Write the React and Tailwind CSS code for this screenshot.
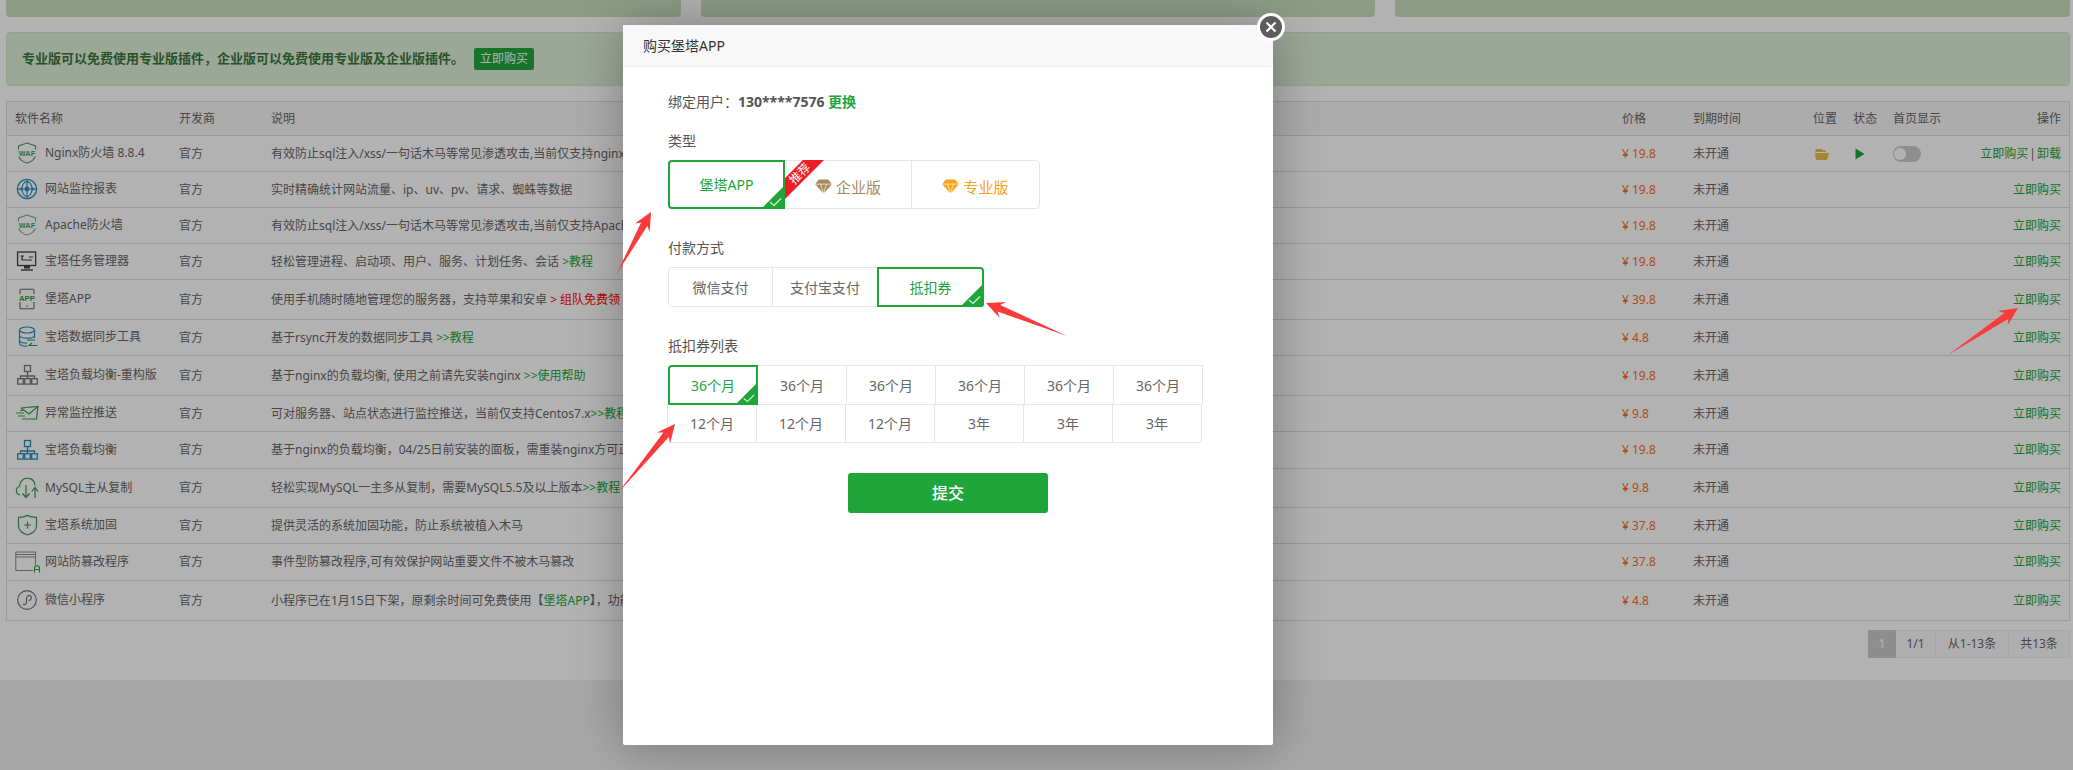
import React from "react";

function Waf({ tone = "#5f8f7f" }) {
  return (
    <svg viewBox="0 0 26 22" className="w-[26px] h-[22px]" fill="none">
      <path d="M12 1 L20.5 4 V13 C20.5 17 16 20 12 21 C8 20 3.5 17 3.5 13 V4 Z" stroke={tone} strokeWidth="1.1" />
      <rect x="3" y="7.5" width="18" height="7" fill="#fff" />
      <text x="12" y="13.6" textAnchor="middle" fontSize="7.4" fontWeight="700" fill="#3c9f78" fontFamily="'Liberation Sans',sans-serif">WAF</text>
    </svg>
  );
}
function Globe() {
  return (
    <svg viewBox="0 0 26 22" className="w-[26px] h-[22px]" fill="none" stroke="#2a8fbd" strokeWidth="1.4">
      <circle cx="12" cy="11" r="9.6" />
      <ellipse cx="12" cy="11" rx="5" ry="7.4" strokeWidth="1.1" />
      <path d="M12 1.5 V20.5 M2.5 11 H21.5" strokeWidth="1.1" />
      <circle cx="12" cy="11" r="2.4" fill="#2a8fbd" stroke="none" />
      <path d="M17 9 L20 11 L17 13 Z" fill="#2a8fbd" stroke="none" />
      <path d="M7 9 L4 11 L7 13 Z" fill="#2a8fbd" stroke="none" />
    </svg>
  );
}
function Monitor() {
  return (
    <svg viewBox="0 0 26 22" className="w-[26px] h-[22px]" fill="none" stroke="#3f3f3f" strokeWidth="1.3">
      <rect x="2.6" y="2" width="18" height="13.5" />
      <path d="M5.5 6 H9 M7 6 V10 H17 M14 7 H18" strokeWidth="1.2" />
      <rect x="9" y="15.5" width="6" height="3" fill="#3f3f3f" stroke="none" />
      <path d="M6 20 H18" strokeWidth="1.4" />
    </svg>
  );
}
function Phone() {
  return (
    <svg viewBox="0 0 26 22" className="w-[26px] h-[22px]" fill="none">
      <rect x="5" y="1.2" width="14" height="19.6" rx="1" stroke="#666" strokeWidth="1.1" />
      <rect x="3" y="6" width="18" height="8" fill="#fff" />
      <circle cx="12" cy="18" r="0.8" fill="#666" />
      <text x="12" y="13" textAnchor="middle" fontSize="7.8" fontWeight="700" fill="#2f9a4a" fontFamily="'Liberation Sans',sans-serif">APP</text>
    </svg>
  );
}
function Db() {
  return (
    <svg viewBox="0 0 26 22" className="w-[26px] h-[22px]" fill="none" stroke="#2a8fbd" strokeWidth="1.2">
      <ellipse cx="12" cy="4" rx="7.5" ry="3" />
      <path d="M4.5 4 V17 C4.5 19 8 20.2 12 20.2 M19.5 4 V12 M4.5 9 C4.5 11 8 12.2 12 12.2 S19.5 11 19.5 9 M4.5 14 C4.5 16 8 17.2 12 17.2" />
      <path d="M12 14 H20 M22.5 19.5 H14 L17 17" stroke="#2f9a4a" strokeWidth="1.1" />
    </svg>
  );
}
function Net({ c }) {
  return (
    <svg viewBox="0 0 26 22" className="w-[26px] h-[22px]" fill="none" stroke={c} strokeWidth="1.3">
      <rect x="9.5" y="1.5" width="6" height="6" />
      <path d="M12.5 7.5 V12 M5.5 14.5 V12 H19.5 V14.5 M12.5 12 V14.5" />
      <rect x="2.7" y="14.7" width="5.6" height="5.4" />
      <rect x="9.7" y="14.7" width="5.6" height="5.4" />
      <rect x="16.7" y="14.7" width="5.6" height="5.4" />
    </svg>
  );
}
function Mail() {
  return (
    <svg viewBox="0 0 26 22" className="w-[26px] h-[22px]" fill="none" stroke="#3e9a52" strokeWidth="1.2">
      <path d="M6 6 L23 4.5 L21.5 17 L7 17" />
      <path d="M6 6 L14 12 L23 4.5" />
      <path d="M1 11 H9 M3 14 H10 M5 8.5 H8" />
    </svg>
  );
}
function Cloud() {
  return (
    <svg viewBox="0 0 26 22" className="w-[26px] h-[22px]" fill="none" stroke="#2f9a4a" strokeWidth="1.2">
      <path d="M5 18 C0.5 17 0 10.5 4.5 9.5 C4.5 5 8 1 12.5 1.2 C16.5 1.2 19.5 4 20 8.5" />
      <path d="M11 8 V20 M7.5 16.5 L11 20.5 L14.5 16.5" />
      <path d="M20 21 V11 M16.8 14.5 L20 10.5 L23.2 14.5" />
    </svg>
  );
}
function ShieldPlus() {
  return (
    <svg viewBox="0 0 26 22" className="w-[26px] h-[22px]" fill="none" stroke="#3e9a52" strokeWidth="1.2">
      <path d="M12.5 1.2 C15 3 18 3.3 21.5 3.3 V12 C21.5 16.5 17 19.8 12.5 21 C8 19.8 3.5 16.5 3.5 12 V3.3 C7 3.3 10 3 12.5 1.2 Z" />
      <path d="M12.5 7.5 V14.5 M9 11 H16" />
    </svg>
  );
}
function WinLock() {
  return (
    <svg viewBox="0 0 26 22" className="w-[26px] h-[22px]" fill="none" stroke="#888" strokeWidth="1">
      <path d="M18 19.5 H0.8 V1 H20.5 V14" />
      <path d="M0.8 3.5 H20.5 M0.8 6 H20.5" />
      <path d="M19.5 21.5 V17 C19.5 14 24.5 14 24.5 17 V21.5 M19.5 18.5 H24.5" stroke="#2f9a4a" strokeWidth="1.1" />
    </svg>
  );
}
function Mini() {
  return (
    <svg viewBox="0 0 26 22" className="w-[26px] h-[22px]" fill="none" stroke="#777" strokeWidth="1.2">
      <circle cx="12" cy="11" r="9.3" />
      <path d="M8 15 C10 16.5 12 14.5 11.5 11 C11 7.5 13.5 5.5 15.5 7 C17.5 8.5 16 11.5 13.5 11.3" />
    </svg>
  );
}

const rows = [
  { h: "h-[36px]", icon: <Waf />, name: "Nginx防火墙 8.8.4", desc: <>有效防止sql注入/xss/一句话木马等常见渗透攻击,当前仅支持nginx</>, price: "¥ 19.8", first: true },
  { h: "h-[36px]", icon: <Globe />, name: "网站监控报表", desc: <>实时精确统计网站流量、ip、uv、pv、请求、蜘蛛等数据</>, price: "¥ 19.8" },
  { h: "h-[36px]", icon: <Waf tone="#8aa59a" />, name: "Apache防火墙", desc: <>有效防止sql注入/xss/一句话木马等常见渗透攻击,当前仅支持Apache</>, price: "¥ 19.8" },
  { h: "h-[36px]", icon: <Monitor />, name: "宝塔任务管理器", desc: <>轻松管理进程、启动项、用户、服务、计划任务、会话 <span className="text-[#20a53a]">&gt;教程</span></>, price: "¥ 19.8" },
  { h: "h-[40px]", icon: <Phone />, name: "堡塔APP", desc: <>使用手机随时随地管理您的服务器，支持苹果和安卓 <span className="text-[#ff0000]">&gt; 组队免费领</span></>, price: "¥ 39.8" },
  { h: "h-[36px]", icon: <Db />, name: "宝塔数据同步工具", desc: <>基于rsync开发的数据同步工具 <span className="text-[#20a53a]">&gt;&gt;教程</span></>, price: "¥ 4.8" },
  { h: "h-[40px]", icon: <Net c="#777" />, name: "宝塔负载均衡-重构版", desc: <>基于nginx的负载均衡, 使用之前请先安装nginx <span className="text-[#20a53a]">&gt;&gt;使用帮助</span></>, price: "¥ 19.8" },
  { h: "h-[36px]", icon: <Mail />, name: "异常监控推送", desc: <>可对服务器、站点状态进行监控推送，当前仅支持Centos7.x<span className="text-[#20a53a]">&gt;&gt;教程</span></>, price: "¥ 9.8" },
  { h: "h-[37px]", icon: <Net c="#2a8fbd" />, name: "宝塔负载均衡", desc: <>基于nginx的负载均衡，04/25日前安装的面板，需重装nginx方可正常使用</>, price: "¥ 19.8" },
  { h: "h-[39px]", icon: <Cloud />, name: "MySQL主从复制", desc: <>轻松实现MySQL一主多从复制，需要MySQL5.5及以上版本<span className="text-[#20a53a]">&gt;&gt;教程</span></>, price: "¥ 9.8" },
  { h: "h-[36px]", icon: <ShieldPlus />, name: "宝塔系统加固", desc: <>提供灵活的系统加固功能，防止系统被植入木马</>, price: "¥ 37.8" },
  { h: "h-[37px]", icon: <WinLock />, name: "网站防篡改程序", desc: <>事件型防篡改程序,可有效保护网站重要文件不被木马篡改</>, price: "¥ 37.8" },
  { h: "h-[40px]", icon: <Mini />, name: "微信小程序", desc: <>小程序已在1月15日下架，原剩余时间可免费使用【<span className="text-[#20a53a]">堡塔APP</span>】，功能一致</>, price: "¥ 4.8" },
];

const cols = "grid grid-cols-[172px_92px_1351px_71px_120px_40px_40px_70px_1fr] items-center";

function Row({ r }) {
  return (
    <div className={`${cols} ${r.h} border-b border-[#dddddd] text-xs text-[#666666]`}>
      <div className="flex items-center pl-2 -mt-px">
        <span className="w-[26px] h-[22px] shrink-0 mr-[4px]">{r.icon}</span>
        <span className="whitespace-nowrap">{r.name}</span>
      </div>
      <div>官方</div>
      <div className="whitespace-nowrap">{r.desc}</div>
      <div className="text-[#fc6d26]">{r.price}</div>
      <div>未开通</div>
      <div>
        {r.first && (
          <svg viewBox="0 0 16 12" className="w-[16px] h-[12px]">
            <path d="M2 3 L3 1 H9 L10 2.5 H13 V4 H3 Z" fill="#e8c04e" />
            <path d="M2 5 H16 L14 12 H3 Z" fill="#e8c04e" />
          </svg>
        )}
      </div>
      <div>
        {r.first && (
          <svg viewBox="0 0 10 12" className="w-[10px] h-[12px] ml-[2px]">
            <path d="M0.5 0.5 L9.5 6 L0.5 11.5 Z" fill="#20a53a" />
          </svg>
        )}
      </div>
      <div>
        {r.first && (
          <div className="w-[28px] h-[16px] rounded-full bg-[#cccccc] flex items-center px-[1px]">
            <div className="w-[12px] h-[12px] rounded-full bg-white" />
          </div>
        )}
      </div>
      <div className="text-right pr-2 text-[#20a53a] whitespace-nowrap">
        立即购买{r.first && <><span className="text-[#666666] px-[1px]">|</span>卸载</>}
      </div>
    </div>
  );
}

function Tick({ size = 24 }) {
  return (
    <svg viewBox="0 0 24 24" style={{ width: size, height: size }} className="absolute -right-[2px] -bottom-[2px]">
      <path d="M24 0 V21 Q24 24 21 24 H0 Z" fill="#20a53a" />
      <path d="M9 17 L13 20.5 L20 13.5" fill="none" stroke="#dff5e3" strokeWidth="1.1" />
    </svg>
  );
}

function Cell({ w, h, sel, round, children, cls = "", tick = 24 }) {
  return (
    <div
      className={`relative flex items-center justify-center pt-px text-sm ${w} ${h} ${round} ${cls} ${
        sel ? "border-2 border-[#20a53a] text-[#20a53a] z-10" : "border border-[#e6e6e6] text-[#666666]"
      }`}
    >
      {children}
      {sel && <Tick size={tick} />}
    </div>
  );
}

function Gem({ c }) {
  return (
    <svg viewBox="0 0 18 15" className="w-[17px] h-[15px] mr-[4px] mt-[2px]">
      <path d="M4 0 H14 L18 5 L9 15 L0 5 Z" fill={c} />
      <path d="M0 5 H18 M6 5 L9 15 L12 5" fill="none" stroke="#fff" strokeWidth="0.7" />
    </svg>
  );
}

function arrow(tx, ty, px, py) {
  const L = Math.hypot(px - tx, py - ty);
  const ux = (px - tx) / L, uy = (py - ty) / L;
  const nx = -uy, ny = ux;
  const at = (back, off) => `${px - ux * back + nx * off},${py - uy * back + ny * off}`;
  return [`${tx},${ty}`, at(14, 3.5), at(18, 8.5), `${px},${py}`, at(18, -8.5), at(14, -3.5)].join(" ");
}

export default function App() {
  return (
    <div className="relative w-[2073px] h-[770px] overflow-hidden bg-[#f0f0f0] font-['Noto_Sans','Noto_Sans_CJK_SC',sans-serif]">
      <div className="h-[680px] bg-white pl-[6px] pr-[3px]">
        <div className="flex gap-[20px] h-[17px]">
          <div className="flex-1 bg-[#c9e0bd] rounded-b-[4px]" />
          <div className="flex-1 bg-[#c9e0bd] rounded-b-[4px]" />
          <div className="flex-1 bg-[#c9e0bd] rounded-b-[4px]" />
        </div>
        <div className="mt-[15px] h-[54px] bg-[#dff0d8] border border-[#d6e9c6] rounded-[4px] flex items-center pl-[15px]">
          <span className="text-[13px] font-bold text-[#3c763d]">专业版可以免费使用专业版插件，企业版可以免费使用专业版及企业版插件。</span>
          <span className="ml-[10px] w-[60px] h-[22px] flex items-center justify-center bg-[#20a53a] rounded-[2px] text-xs text-white">立即购买</span>
        </div>
        <div className="mt-[15px] border border-[#dddddd] border-b-0">
          <div className={`${cols} h-[34px] bg-[#f6f6f6] border-b border-[#dddddd] text-xs text-[#666666]`}>
            <div className="pl-2">软件名称</div>
            <div>开发商</div>
            <div>说明</div>
            <div>价格</div>
            <div>到期时间</div>
            <div>位置</div>
            <div>状态</div>
            <div>首页显示</div>
            <div className="text-right pr-2">操作</div>
          </div>
          {rows.map((r, i) => <Row key={i} r={r} />)}
        </div>
        <div className="mt-[9px] flex justify-end text-xs text-[#666666]">
          <div className="w-[28px] h-[28px] flex items-center justify-center bg-[#cccccc] text-white">1</div>
          <div className="w-[40px] h-[28px] flex items-center justify-center bg-[#fafafa] border border-[#eeeeee] border-l-0">1/1</div>
          <div className="w-[73px] h-[28px] flex items-center justify-center bg-[#fafafa] border border-[#eeeeee] border-l-0">从1-13条</div>
          <div className="w-[61px] h-[28px] flex items-center justify-center bg-[#fafafa] border border-[#eeeeee] border-l-0">共13条</div>
        </div>
      </div>

      <div className="absolute inset-0 bg-black/30" />

      <div className="absolute left-[623px] top-[25px] w-[650px] h-[720px] bg-white rounded-[2px] shadow-[1px_1px_50px_rgba(0,0,0,0.3)]">
        <div className="h-[42px] flex items-center pl-[20px] bg-[#f8f8f8] border-b border-[#eeeeee] text-sm text-[#333333]">购买堡塔APP</div>
        <div className="pl-[45px] text-sm text-[#555555]">
          <div className="mt-[25px] h-[20px] leading-[20px]">绑定用户：<span className="font-bold">130****7576</span> <span className="font-bold text-[#20a53a]">更换</span></div>
          <div className="mt-[19px] h-[20px] leading-[20px]">类型</div>
          <div className="relative mt-[9px] flex">
            <Cell w="w-[117px]" h="h-[49px]" sel round="rounded-l-[4px]">堡塔APP</Cell>
            <Cell w="w-[128px]" h="h-[49px]" cls="-ml-px !text-[#a58c5f] !text-[15px]"><Gem c="#a58c5f" /><span className="mt-[6px]">企业版</span></Cell>
            <Cell w="w-[129px]" h="h-[49px]" round="rounded-r-[4px]" cls="-ml-px !text-[#f4a31b] !text-[15px]"><Gem c="#f9a51b" /><span className="mt-[6px]">专业版</span></Cell>
            <svg viewBox="0 0 40 40" className="absolute left-[117px] top-0 w-[40px] h-[40px] z-20">
              <path d="M18 0 H39 L0 39 V18 Z" fill="#ee1c25" />
            </svg>
            <span className="absolute left-[118px] top-[4px] w-[28px] text-center text-xs leading-[20px] text-white -rotate-45 z-20">推荐</span>
          </div>
          <div className="mt-[29px] h-[20px] leading-[20px]">付款方式</div>
          <div className="mt-[9px] flex">
            <Cell w="w-[105px]" h="h-[40px]" round="rounded-l-[4px]">微信支付</Cell>
            <Cell w="w-[106px]" h="h-[40px]" cls="-ml-px">支付宝支付</Cell>
            <Cell w="w-[107px]" h="h-[40px]" sel round="rounded-r-[4px]" cls="-ml-px">抵扣券</Cell>
          </div>
          <div className="mt-[29px] h-[20px] leading-[20px]">抵扣券列表</div>
          <div className="mt-[9px] flex">
            <Cell w="w-[90px]" h="h-[40px]" sel tick={23} round="rounded-tl-[4px]">36个月</Cell>
            <Cell w="w-[90px]" h="h-[40px]" cls="-ml-px">36个月</Cell>
            <Cell w="w-[90px]" h="h-[40px]" cls="-ml-px">36个月</Cell>
            <Cell w="w-[90px]" h="h-[40px]" cls="-ml-px">36个月</Cell>
            <Cell w="w-[90px]" h="h-[40px]" cls="-ml-px">36个月</Cell>
            <Cell w="w-[90px]" h="h-[40px]" cls="-ml-px">36个月</Cell>
          </div>
          <div className="flex -mt-px -ml-px">
            <Cell w="w-[90px]" h="h-[39px]">12个月</Cell>
            <Cell w="w-[90px]" h="h-[39px]" cls="-ml-px">12个月</Cell>
            <Cell w="w-[90px]" h="h-[39px]" cls="-ml-px">12个月</Cell>
            <Cell w="w-[90px]" h="h-[39px]" cls="-ml-px">3年</Cell>
            <Cell w="w-[90px]" h="h-[39px]" cls="-ml-px">3年</Cell>
            <Cell w="w-[90px]" h="h-[39px]" cls="-ml-px" round="rounded-br-[4px]">3年</Cell>
          </div>
          <div className="mt-[30px] ml-[180px] w-[200px] h-[40px] flex items-center justify-center rounded-[3px] bg-[#20a53a] text-base font-medium text-white">提交</div>
        </div>
        <div className="absolute -right-[12px] -top-[12px] w-[28px] h-[28px] rounded-full bg-[#5c5c5c] border-[3px] border-white flex items-center justify-center">
          <svg viewBox="0 0 12 12" className="w-[12px] h-[12px]">
            <path d="M1.5 1.5 L10.5 10.5 M10.5 1.5 L1.5 10.5" stroke="#fff" strokeWidth="2.2" />
          </svg>
        </div>
      </div>

      <svg viewBox="0 0 2073 770" className="absolute left-0 top-0 w-[2073px] h-[770px] pointer-events-none">
        <polygon points={arrow(616, 275, 651, 212)} fill="#fb3b3b" />
        <polygon points={arrow(1067, 336, 986, 303)} fill="#fb3b3b" />
        <polygon points={arrow(618, 493, 675, 424)} fill="#fb3b3b" />
        <polygon points={arrow(1948, 355, 2018, 308)} fill="#fb3b3b" />
      </svg>
    </div>
  );
}
